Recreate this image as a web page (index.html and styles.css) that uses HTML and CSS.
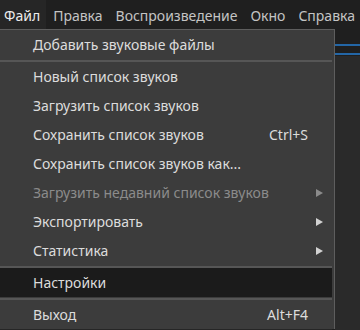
FILE: index.html
```html
<!DOCTYPE html>
<html lang="ru">
<head>
<meta charset="utf-8">
<link rel="stylesheet" href="styles.css">
</head>
<body>
<div class="app">
  <nav class="menubar">
    <span class="mb-item active">Файл</span>
    <span class="mb-item">Правка</span>
    <span class="mb-item">Воспроизведение</span>
    <span class="mb-item">Окно</span>
    <span class="mb-item">Справка</span>
  </nav>
  <div class="workspace">
    <div class="side">
      <div class="blue-line first"></div>
      <div class="blue-line"></div>
    </div>
  </div>
  <div class="menu">
    <div class="item"><span class="label">Добавить звуковые файлы</span><span class="arrow-box"></span></div>
    <div class="sep"></div>
    <div class="item"><span class="label">Новый список звуков</span><span class="arrow-box"></span></div>
    <div class="item"><span class="label">Загрузить список звуков</span><span class="arrow-box"></span></div>
    <div class="item"><span class="label">Сохранить список звуков</span><span class="shortcut">Ctrl+S</span><span class="arrow-box"></span></div>
    <div class="item"><span class="label">Сохранить список звуков как...</span><span class="arrow-box"></span></div>
    <div class="item disabled"><span class="label">Загрузить недавний список звуков</span><span class="arrow-box"><span class="arrow"></span></span></div>
    <div class="item"><span class="label">Экспортировать</span><span class="arrow-box"><span class="arrow"></span></span></div>
    <div class="item"><span class="label">Статистика</span><span class="arrow-box"><span class="arrow"></span></span></div>
    <div class="sep"></div>
    <div class="item hover"><span class="label">Настройки</span><span class="arrow-box"></span></div>
    <div class="sep"></div>
    <div class="item"><span class="label">Выход</span><span class="shortcut">Alt+F4</span><span class="arrow-box"></span></div>
  </div>
</div>
</body>
</html>
```
FILE: styles.css
```css
html, body {
  margin: 0;
  padding: 0;
  background: #262626;
}
body {
  font-family: "Noto Sans", "Open Sans", sans-serif;
  font-size: 14px;
  width: 360px;
  height: 330px;
  overflow: hidden;
}
.app {
  position: relative;
  width: 360px;
  height: 330px;
  display: flex;
  flex-direction: column;
}
.menubar {
  height: 29px;
  background: #1f1f1f;
  display: flex;
  align-items: stretch;
  white-space: nowrap;
}
.mb-item {
  display: flex;
  align-items: center;
  padding: 2px 6px 0 5px;
  margin-right: 2px;
  color: #c4c4c4;
}
.mb-item.active {
  background: #262626;
  color: #ececec;
  padding-left: 4px;
}
.workspace {
  flex: 1;
  display: flex;
  justify-content: flex-end;
  background: #262626;
}
.side {
  width: 25px;
  background: #2a2a2a;
  border-left: 3px solid #1f1f1f;
  padding-top: 15px;
  background-image: linear-gradient(#1f1f1f, #1f1f1f);
  background-size: 100% 27px;
  background-repeat: no-repeat;
}
.blue-line {
  height: 2px;
  background: #2366a6;
  margin-bottom: 7px;
}
.menu {
  position: absolute;
  left: 0;
  top: 29px;
  width: 332px;
  padding-right: 2px;
  background: #3c3c3c;
  border-top: 1px solid #5e5e5e;
  border-right: 1px solid #5e5e5e;
  color: #dcdcdc;
}
.item {
  height: 29px;
  display: flex;
  align-items: center;
  padding-left: 33px;
  white-space: nowrap;
}
.item .label {
  flex: 1;
}
.item.disabled {
  color: #8b8b8b;
}
.item.hover {
  background: #1b1b1b;
}
.shortcut {
  color: #dcdcdc;
}
.arrow-box {
  width: 24px;
  height: 29px;
  display: flex;
  align-items: center;
  padding-left: 8px;
  box-sizing: border-box;
}
.arrow {
  width: 0;
  height: 0;
  border-left: 7px solid #d2d2d2;
  border-top: 4px solid transparent;
  border-bottom: 4px solid transparent;
}
.item.disabled .arrow {
  border-left-color: #8b8b8b;
}
.sep {
  height: 2px;
  margin-top: 1px;
  background: #565656;
}
```
